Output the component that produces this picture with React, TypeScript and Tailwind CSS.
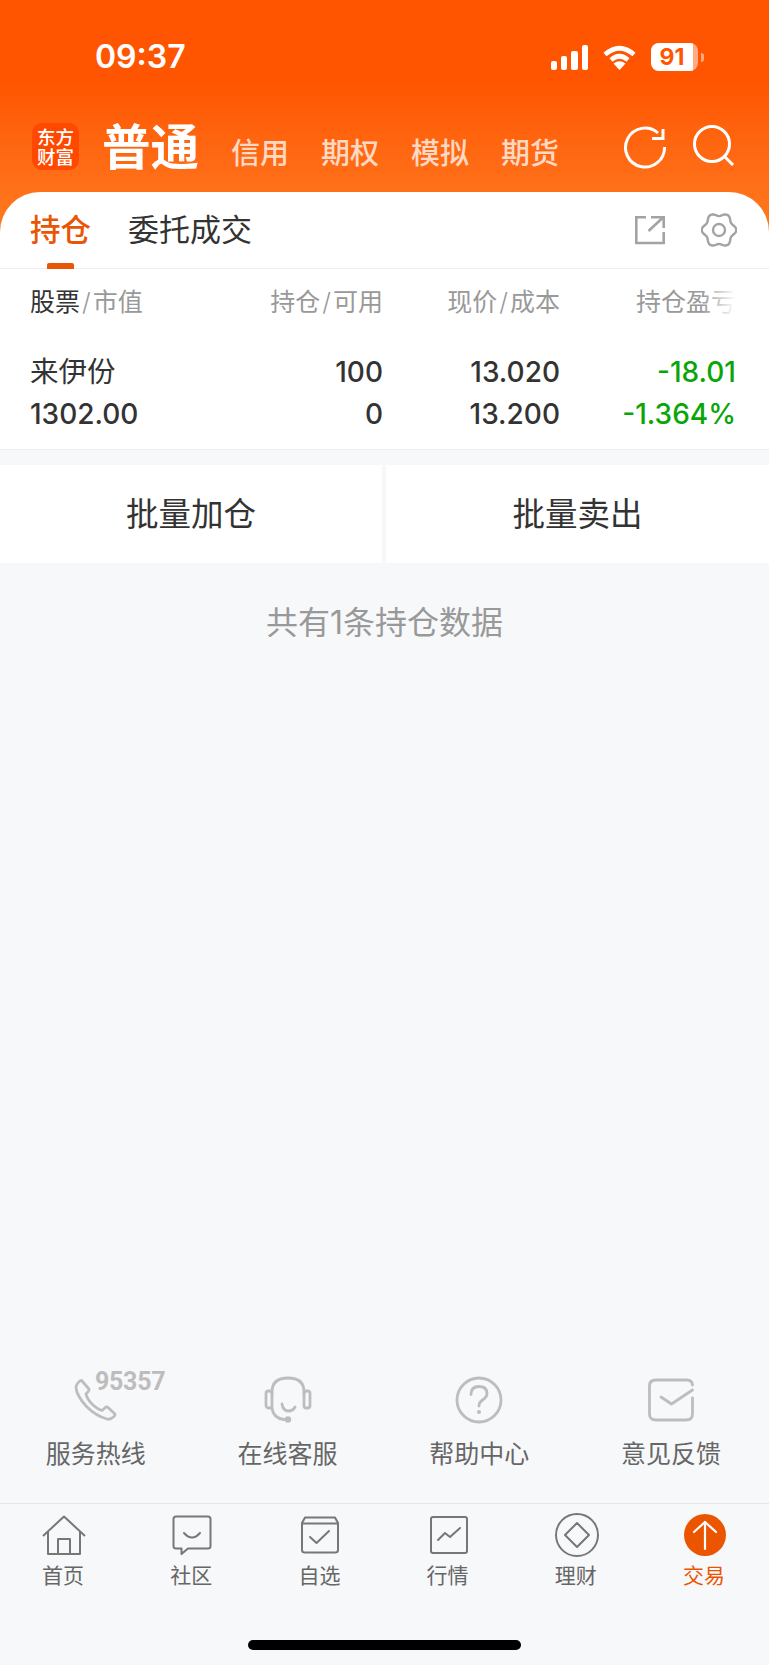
import React from "react";

const Refresh = () => (
  <svg width="44" height="44" viewBox="0 0 44 44" fill="none" stroke="#fff" strokeWidth="3" strokeLinecap="butt" strokeLinejoin="miter">
    <path d="M35 8 A19.5 19.5 0 1 0 41.5 22" />
    <path d="M40 4 V13.5 H29" />
  </svg>
);

const Search = () => (
  <svg width="44" height="44" viewBox="0 0 44 44" fill="none" stroke="#fff" strokeWidth="3">
    <circle cx="20" cy="19" r="17.5" />
    <path d="M32.5 31.5 L41 40" />
  </svg>
);

const ExportIcon = () => (
  <svg width="32" height="30" viewBox="0 0 32 30" fill="none" stroke="#a3a3a3" strokeWidth="2.6">
    <path d="M12 2.3 H2.3 V28 H29.7 V17" />
    <path d="M14.5 16 L29 2.5" />
    <path d="M17 2.3 H29.7 V13" />
  </svg>
);

// six soft lobes round a ring
const gearPath =
  Array.from({ length: 72 }, (_, i) => {
    const a = (i / 72) * Math.PI * 2;
    const r = 15.6 + 1.7 * Math.cos(6 * a);
    return `${i === 0 ? "M" : "L"}${(18 + r * Math.cos(a)).toFixed(2)} ${(18 + r * Math.sin(a)).toFixed(2)}`;
  }).join(" ") + " Z";

const Gear = () => (
  <svg width="36" height="36" viewBox="0 0 36 36" fill="none" stroke="#a3a3a3" strokeWidth="2.4" strokeLinejoin="round">
    <path d={gearPath} />
    <circle cx="18" cy="18" r="6" />
  </svg>
);

const Phone = () => (
  <svg width="44" height="44" viewBox="0 0 44 44" fill="none" stroke="#bdbdbd" strokeWidth="2.8" strokeLinejoin="round">
    <path d="M8 3 L15 11 Q15.5 12.5 12 16 Q13 21 18.5 26.5 Q24 31.5 28 32.5 L32 29 Q33 28.5 34 29.5 L41 36 Q41.5 37 40 38.5 Q36 42 33 41 Q22 38 12.5 28.5 Q3 18 2 10 Q2 6 6 3 Q7.5 2 8 3 Z" />
  </svg>
);

const Headset = () => (
  <svg width="48" height="48" viewBox="0 0 48 48" fill="none" stroke="#bdbdbd" strokeWidth="2.8" strokeLinecap="round">
    <path d="M8 18 V16 Q8 2 24 2 Q40 2 40 16 V18" />
    <path d="M8 32 Q9 42 20 43.5" />
    <rect x="2" y="15" width="6" height="17" rx="2.5" />
    <rect x="40" y="15" width="6" height="17" rx="2.5" />
    <path d="M18 28 Q19 35 24.5 35 Q29 35 31 31" />
    <circle cx="24" cy="43.5" r="3.2" fill="#bdbdbd" stroke="none" />
  </svg>
);

const Help = () => (
  <svg width="48" height="48" viewBox="0 0 48 48" fill="none" stroke="#bdbdbd" strokeWidth="2.8" strokeLinecap="round">
    <circle cx="24" cy="24" r="22" />
    <path d="M16 18.5 Q16 10.5 24 10.5 Q32 10.5 32 17.5 Q32 21 27.5 24 Q24 26.5 24 30" />
    <circle cx="24" cy="36" r="2" fill="#bdbdbd" stroke="none" />
  </svg>
);

const Mail = () => (
  <svg width="48" height="44" viewBox="0 0 48 44" fill="none" stroke="#bdbdbd" strokeWidth="2.8" strokeLinecap="round" strokeLinejoin="round">
    <path d="M45.5 20 V36 Q45.5 42 39 42 H9 Q2.5 42 2.5 36 V8 Q2.5 2 9 2 H40 Q45 2 45.5 7" />
    <path d="M14 19 L24.5 26 L45.5 12" />
  </svg>
);

const Home = () => (
  <svg width="44" height="40" viewBox="0 0 44 40" fill="none" stroke="#777" strokeWidth="2" strokeLinejoin="round">
    <path d="M1 21 L22 1.5 L43 21" />
    <path d="M6 17 V39 H38 V17" />
    <path d="M16 39 V24 H28 V39" />
  </svg>
);

const Chat = () => (
  <svg width="40" height="40" viewBox="0 0 40 40" fill="none" stroke="#777" strokeWidth="2" strokeLinejoin="round" strokeLinecap="round">
    <path d="M4 1.5 H36 Q38.5 1.5 38.5 4 V31 Q38.5 33.5 36 33.5 H16 L9.5 39 V33.5 H4 Q1.5 33.5 1.5 31 V4 Q1.5 1.5 4 1.5 Z" />
    <path d="M12 18 Q20 27 28 18" />
  </svg>
);

const Watch = () => (
  <svg width="38" height="38" viewBox="0 0 38 38" fill="none" stroke="#777" strokeWidth="2" strokeLinejoin="round" strokeLinecap="round">
    <path d="M4 1.5 H34 L37 7 V34 Q37 36.5 34 36.5 H4 Q1 36.5 1 34 V7 Z" />
    <path d="M1 7.5 H37" />
    <path d="M9 21 L15.5 27 L28 15" />
  </svg>
);

const Trend = () => (
  <svg width="38" height="38" viewBox="0 0 38 38" fill="none" stroke="#777" strokeWidth="2" strokeLinejoin="round" strokeLinecap="round">
    <rect x="1" y="1" width="36" height="36" rx="2" />
    <path d="M8 24 L15 17 L20 21 L30 12" />
  </svg>
);

const Diamond = () => (
  <svg width="44" height="44" viewBox="0 0 44 44" fill="none" stroke="#777" strokeWidth="2" strokeLinejoin="round">
    <circle cx="22" cy="22" r="21" />
    <path d="M22 10 L34 22 L22 34 L10 22 Z" />
  </svg>
);

const TradeIcon = () => (
  <div className="flex h-[42px] w-[42px] items-center justify-center rounded-full bg-[#ec5500]">
    <svg width="26" height="32" viewBox="0 0 26 32" fill="none" stroke="#fff" strokeWidth="2.2" strokeLinecap="round" strokeLinejoin="round">
      <path d="M13 3 V30" />
      <path d="M2 13 L13 3 L24 13" />
    </svg>
  </div>
);

const services = [
  { label: "服务热线", icon: <Phone /> },
  { label: "在线客服", icon: <Headset /> },
  { label: "帮助中心", icon: <Help /> },
  { label: "意见反馈", icon: <Mail /> },
];

const tabs = [
  { label: "首页", icon: <Home /> },
  { label: "社区", icon: <Chat /> },
  { label: "自选", icon: <Watch /> },
  { label: "行情", icon: <Trend /> },
  { label: "理财", icon: <Diamond /> },
  { label: "交易", icon: <TradeIcon />, active: true },
];

export default function App() {
  return (
    <div className="flex h-[1665px] w-[769px] flex-col overflow-hidden bg-[#f7f8fa] font-['Inter','Noto_Sans_CJK_SC',sans-serif]">
      {/* orange header */}
      <div className="h-[232px] shrink-0 bg-linear-to-b from-[#ff5500] from-35% to-[#ff7a1f]">
        <div className="flex h-[100px] items-start justify-between pl-[95px] pr-[65px] pt-[38px] text-white">
          <div className="text-[32px] leading-[38px] font-semibold">09:37</div>
          <div className="flex items-center pt-[5px]">
            <svg width="37" height="25" viewBox="0 0 37 25" fill="#fff">
              <rect x="0" y="16" width="6" height="9" rx="2" />
              <rect x="10" y="11" width="6" height="14" rx="2" />
              <rect x="20" y="6" width="7" height="19" rx="2" />
              <rect x="31" y="0" width="6" height="25" rx="2" />
            </svg>
            <svg className="ml-[15px]" width="33" height="25" viewBox="0 0 33 25" fill="none" stroke="#fff" strokeWidth="4.6">
              <path d="M2 9.5 Q16.5 -3 31 9.5" />
              <path d="M8 15 Q16.5 7.5 25 15" />
              <path d="M16.5 25 L10.5 18.5 Q16.5 14 22.5 18.5 Z" fill="#fff" stroke="none" />
            </svg>
            <div className="relative ml-[15px] flex h-[28px] w-[47px] items-center overflow-hidden rounded-[8px] bg-white/50">
              <div className="flex h-full w-[42px] items-center justify-center bg-white text-[23px] leading-none font-bold text-[#ff5500]">91</div>
            </div>
            <div className="ml-[3px] h-[9px] w-[3px] rounded-r-full bg-white/50" />
          </div>
        </div>
        <div className="flex h-[92px] items-start pl-[32px] pr-[33px]">
          <div className="mt-[23px] flex h-[47px] w-[47px] flex-col items-center justify-center rounded-[10px] bg-[#ff4800] text-[18.5px] leading-[20px] font-medium text-white">
            <span>东方</span>
            <span>财富</span>
          </div>
          <div className="ml-[23px] mt-[16px] text-[48.5px] leading-[64px] font-bold text-white">普通</div>
          <div className="ml-[32px] mt-[33px] flex gap-[32px] text-[29px] leading-[42px] font-medium text-white/75">
            <span>信用</span>
            <span>期权</span>
            <span>模拟</span>
            <span>期货</span>
          </div>
          <div className="ml-auto mt-[25px] flex gap-[25px]">
            <Refresh />
            <Search />
          </div>
        </div>
      </div>

      {/* holdings card */}
      <div className="relative -mt-[40px] shrink-0 rounded-t-[40px] bg-white">
        <div className="flex h-[77px] items-start border-b border-[#eeeeee] pl-[30px] pr-[32px] pt-[16px]">
          <div className="relative text-[30.5px] leading-[44px] font-medium text-[#e95504]">
            持仓
            <div className="absolute left-[17px] top-[55px] h-[6px] w-[27px] rounded-t-[2px] bg-[#e95504]" />
          </div>
          <div className="ml-[37px] text-[31px] leading-[44px] text-[#333333]">委托成交</div>
          <div className="ml-auto flex items-center gap-[35px] pt-[4px]">
            <ExportIcon />
            <Gear />
          </div>
        </div>

        <div className="grid grid-cols-[1fr_176px_177px_176px] pl-[30px] pr-[33px] pt-[1px] text-[25px] text-[#999999]">
          <div className="flex h-[65px] items-center">
            <span className="text-[#333333]">股票</span>
            <span className="mx-[2px] font-light">/</span>市值
          </div>
          <div className="flex h-[65px] items-center justify-end">
            持仓<span className="mx-[2px] font-light">/</span>可用
          </div>
          <div className="flex h-[65px] items-center justify-end">
            现价<span className="mx-[2px] font-light">/</span>成本
          </div>
          <div className="relative flex h-[65px] items-center justify-end">
            持仓盈亏
            <div className="absolute right-0 top-0 h-full w-[34px] bg-linear-to-r from-white/0 to-white" />
          </div>
        </div>

        <div className="grid grid-cols-[1fr_176px_177px_176px] border-b border-[#eeeeee] pl-[30px] pr-[33px] pb-[14px] pt-[16px] text-[28px] leading-[42px] font-medium text-[#333333]">
          <div className="text-[28.5px] font-normal">来伊份</div>
          <div className="text-right">100</div>
          <div className="text-right">13.020</div>
          <div className="text-right text-[#09a509]">-18.01</div>
          <div>1302.00</div>
          <div className="text-right">0</div>
          <div className="text-right">13.200</div>
          <div className="text-right text-[#09a509]">-1.364%</div>
        </div>
      </div>

      <div className="mt-[15px] flex h-[98px] shrink-0 justify-between">
        <div className="flex w-[382px] items-center justify-center bg-white pt-[3px] text-[32.5px] text-[#333333]">批量加仓</div>
        <div className="flex w-[383px] items-center justify-center bg-white pt-[3px] text-[32.5px] text-[#333333]">批量卖出</div>
      </div>

      <div className="mt-[38px] text-center text-[32px] leading-[44px] text-[#999999]">共有1条持仓数据</div>

      {/* bottom area */}
      <div className="mt-auto">
        <div className="grid grid-cols-4 border-b border-[#e6e6e6] pb-[31px] pr-[2px]">
          {services.map((s) => (
            <div key={s.label} className="relative flex flex-col items-center">
              <div className="flex h-[50px] w-[50px] items-center justify-center">{s.icon}</div>
              {s.label === "服务热线" && (
                <span className="absolute left-[95px] -top-[7px] font-['Roboto'] text-[25px] leading-[28px] font-bold tracking-[-0.3px] text-[#bdbdbd]">95357</span>
              )}
              <div className="mt-[11px] text-[25px] leading-[36px] text-[#666666]">{s.label}</div>
            </div>
          ))}
        </div>
        <div className="grid h-[161px] grid-cols-6 pt-[8px]">
          {tabs.map((t) => (
            <div key={t.label} className="flex flex-col items-center">
              <div className="flex h-[46px] items-center justify-center">{t.icon}</div>
              <div className={`mt-[2px] -translate-x-px text-[21px] leading-[32px] ${t.active ? "text-[#ec5500]" : "text-[#666666]"}`}>{t.label}</div>
            </div>
          ))}
        </div>
      </div>
      <div className="relative">
        <div className="absolute bottom-[15px] left-[248px] h-[10px] w-[273px] rounded-full bg-black" />
      </div>
    </div>
  );
}
